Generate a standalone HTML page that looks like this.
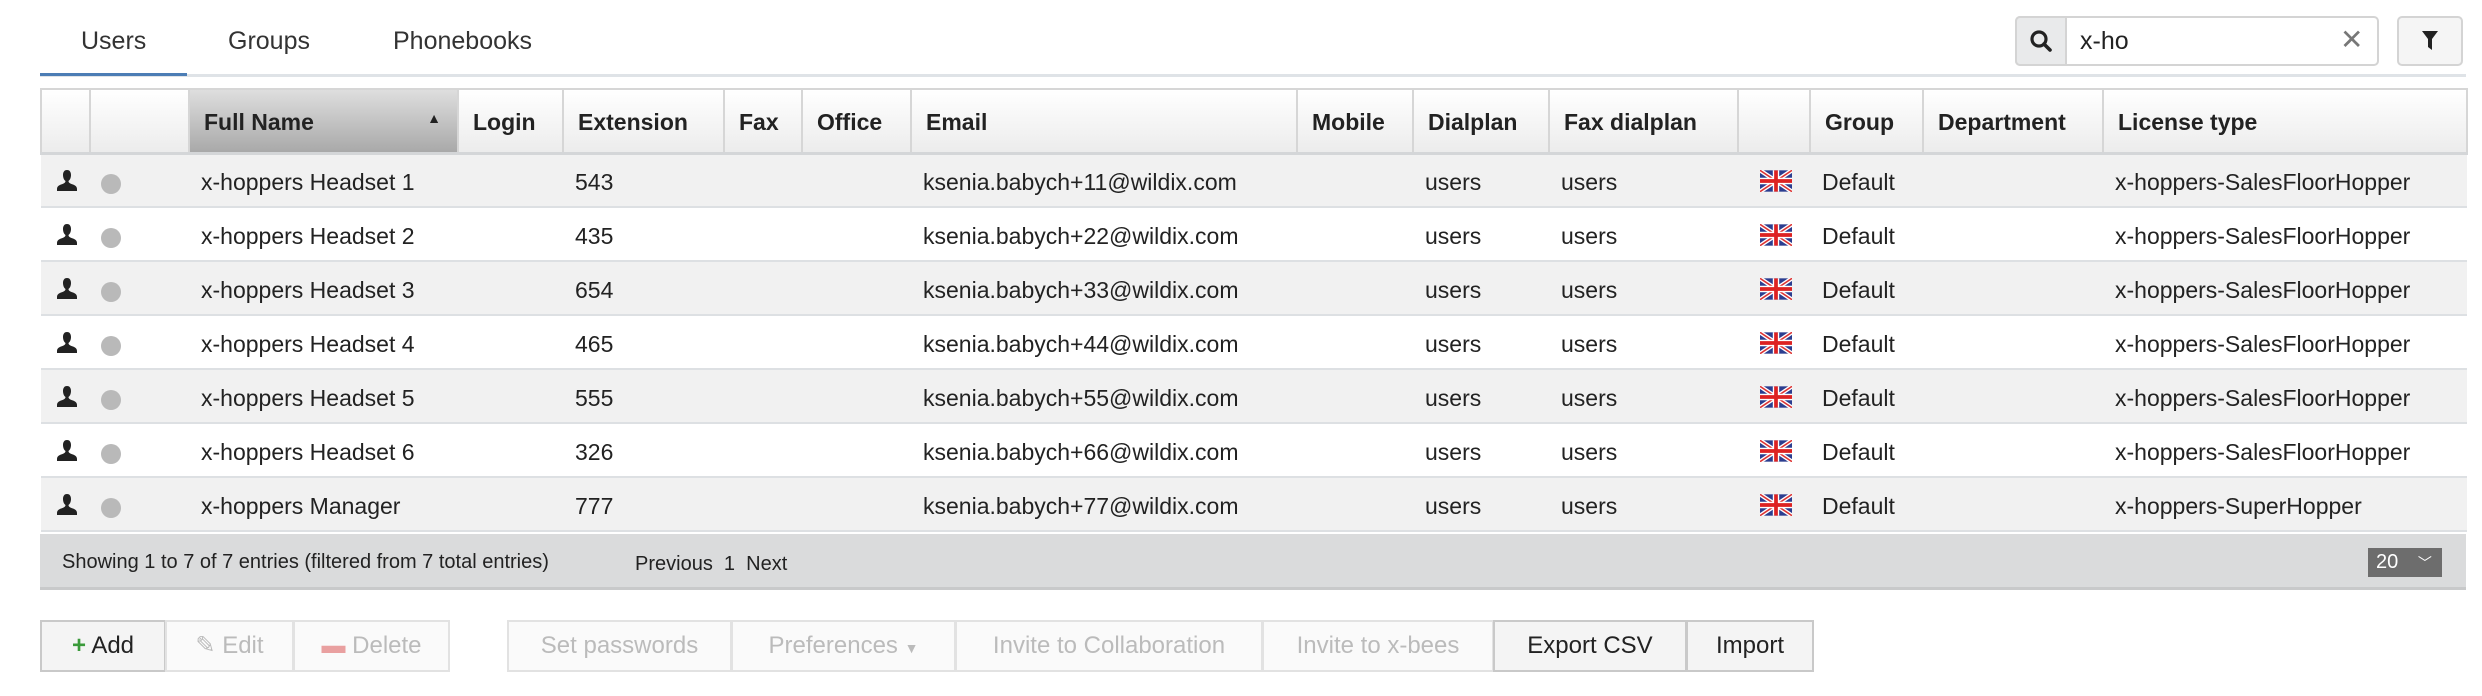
<!DOCTYPE html>
<html><head><meta charset="utf-8"><style>
*{box-sizing:border-box;margin:0;padding:0}
body{width:2482px;height:696px;background:#fff;font-family:"Liberation Sans",Arial,sans-serif;color:#222;position:relative;overflow:hidden}
.abs{position:absolute}
.tab{position:absolute;top:27px;font-size:25px;color:#333}
table{position:absolute;left:40px;top:88px;width:2426px;border-collapse:collapse;table-layout:fixed;font-size:23px}
th{height:64px;text-align:left;padding-left:14px;font-weight:bold;background:linear-gradient(#fff,#ececec);border:2px solid #d6d6d6;border-bottom:3px solid #d4d6d8;color:#222;padding-top:4px}
th.sort{background:linear-gradient(#dedede,#a9a9a9)}
td{height:54px;padding-left:12px;padding-top:5px;border-bottom:2px solid #dde0e3;white-space:nowrap;overflow:hidden}
tr.o td{background:#f1f1f1}
tr.e td{background:#fff}
.foot{position:absolute;left:40px;top:534px;width:2426px;height:56px;background:#dadbdc;border-bottom:3px solid #c8c9ca;font-size:20px}
.btn{position:absolute;top:620px;height:52px;border:2px solid #e2e2e2;background:#fafafa;font-size:24px;color:#bbb;text-align:center;line-height:48px}
.btn.on{color:#222;border-color:#c9c9c9;background:#f4f4f4}
</style></head><body>
<div class="tab" style="left:81px">Users</div>
<div class="tab" style="left:228px">Groups</div>
<div class="tab" style="left:393px">Phonebooks</div>
<div class="abs" style="left:40px;top:74px;width:2426px;height:3px;background:#dfe3e7"></div>
<div class="abs" style="left:40px;top:73px;width:147px;height:3px;background:#4c7db5"></div>

<div class="abs" style="left:2015px;top:16px;width:364px;height:50px;border:2px solid #d4d4d4;border-radius:5px;background:#fff"></div>
<div class="abs" style="left:2015px;top:16px;width:52px;height:50px;border:2px solid #d4d4d4;border-radius:5px 0 0 5px;background:#e9eaeb"></div>
<svg class="abs" style="left:2029px;top:29px" width="24" height="24" viewBox="0 0 24 24"><circle cx="10" cy="10" r="7" fill="none" stroke="#222" stroke-width="3.2"/><path d="M15 15l6 6" stroke="#222" stroke-width="3.6" stroke-linecap="round"/></svg>
<div class="abs" style="left:2080px;top:27px;font-size:25px;color:#222">x-ho</div>
<div class="abs" style="left:2340px;top:23px;font-size:28px;color:#777">✕</div>
<div class="abs" style="left:2397px;top:16px;width:66px;height:50px;border:2px solid #d4d4d4;border-radius:5px;background:#f5f5f5"></div>
<svg class="abs" style="left:2421px;top:30px" width="18" height="22" viewBox="0 0 18 22"><path d="M1 1h16l-6 8v11l-4-3V9z" fill="#222"/></svg>

<table>
<colgroup><col style="width:49px"><col style="width:99px"><col style="width:269px"><col style="width:105px"><col style="width:161px"><col style="width:78px"><col style="width:109px"><col style="width:386px"><col style="width:116px"><col style="width:136px"><col style="width:189px"><col style="width:72px"><col style="width:113px"><col style="width:180px"><col style="width:364px"></colgroup>
<tr><th></th><th></th><th class="sort" style="position:relative">Full Name<span style="position:absolute;right:16px;top:20px;font-size:14px">▲</span></th><th>Login</th><th>Extension</th><th>Fax</th><th>Office</th><th>Email</th><th>Mobile</th><th>Dialplan</th><th>Fax dialplan</th><th></th><th>Group</th><th>Department</th><th>License type</th></tr>
<tbody id="b"></tbody>
</table>
<script>
var d=[["x-hoppers Headset 1","543","+11","SalesFloorHopper"],["x-hoppers Headset 2","435","+22","SalesFloorHopper"],["x-hoppers Headset 3","654","+33","SalesFloorHopper"],["x-hoppers Headset 4","465","+44","SalesFloorHopper"],["x-hoppers Headset 5","555","+55","SalesFloorHopper"],["x-hoppers Headset 6","326","+66","SalesFloorHopper"],["x-hoppers Manager","777","+77","SuperHopper"]];
var person='<svg width="24" height="24" viewBox="0 0 24 24"><path d="M12 1c3 0 4 2.5 4 5s-1 5-2.5 6c0 1 .5 2 3 3 3 1 5.5 2 5.5 5v2H2v-2c0-3 2.5-4 5.5-5 2.5-1 3-2 3-3C9 11 8 8.5 8 6s1-5 4-5z" fill="#222"/></svg>';
var flag='<svg width="32" height="22" viewBox="0 0 60 40"><rect width="60" height="40" fill="#2b3d8f"/><path d="M0 0L60 40M60 0L0 40" stroke="#fff" stroke-width="8"/><path d="M0 0L60 40M60 0L0 40" stroke="#d33" stroke-width="3"/><path d="M30 0v40M0 20h60" stroke="#fff" stroke-width="12"/><path d="M30 0v40M0 20h60" stroke="#d22" stroke-width="7"/></svg>';
var h='';
d.forEach(function(r,i){h+='<tr class="'+(i%2?'e':'o')+'"><td style="padding-left:14px;padding-top:7px">'+person+'</td><td style="padding-left:11px"><span style="display:inline-block;width:20px;height:20px;border-radius:50%;background:#b9b9b9;vertical-align:middle"></span></td><td>'+r[0]+'</td><td></td><td>'+r[1]+'</td><td></td><td></td><td>ksenia.babych'+r[2]+'@wildix.com</td><td></td><td>users</td><td>users</td><td style="padding-left:22px;padding-top:8px">'+flag+'</td><td>Default</td><td></td><td>x-hoppers-'+r[3]+'</td></tr>';});
document.getElementById('b').innerHTML=h;
</script>
<div class="foot"><span class="abs" style="left:22px;top:17px">Showing 1 to 7 of 7 entries (filtered from 7 total entries)</span><span class="abs" style="left:595px;top:19px">Previous&nbsp;&nbsp;1&nbsp;&nbsp;Next</span>
<div class="abs" style="left:2328px;top:14px;width:74px;height:29px;background:#6d6d6d;color:#fff;font-size:20px;padding:3px 0 0 8px">20 <span style="font-size:14px;margin-left:14px">﹀</span></div></div>

<div class="btn on" style="left:40px;width:126px"><span style="color:#3a9a3a;font-weight:bold">+</span> Add</div>
<div class="btn" style="left:165px;width:129px">✎ Edit</div>
<div class="btn" style="left:293px;width:157px"><span style="color:#e9a0a0">▬</span> Delete</div>
<div class="btn" style="left:507px;width:225px">Set passwords</div>
<div class="btn" style="left:731px;width:225px">Preferences <span style="font-size:14px">▼</span></div>
<div class="btn" style="left:955px;width:308px">Invite to Collaboration</div>
<div class="btn" style="left:1262px;width:232px">Invite to x-bees</div>
<div class="btn on" style="left:1493px;width:194px">Export CSV</div>
<div class="btn on" style="left:1686px;width:128px">Import</div>
</body></html>
